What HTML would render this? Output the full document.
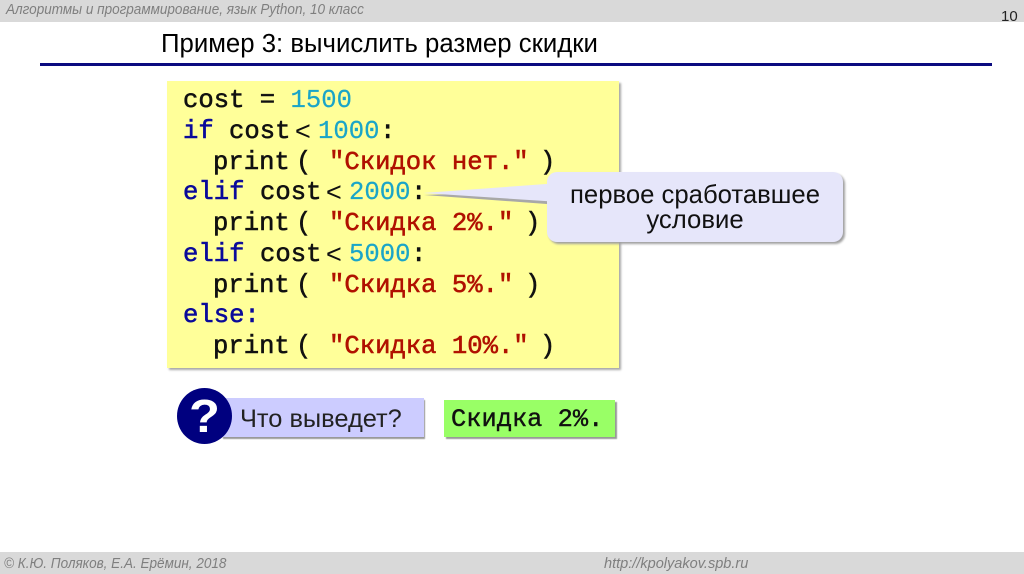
<!DOCTYPE html>
<html><head><meta charset="utf-8"><style>
html,body{margin:0;padding:0;background:#fff}
#p{position:relative;width:1024px;height:574px;overflow:hidden;background:#fff;font-family:"Liberation Sans",sans-serif}
#p div{position:absolute;white-space:pre}
.c{font-family:"Liberation Mono",monospace;font-weight:normal;-webkit-text-stroke:.55px currentColor;font-size:25.6px;line-height:30px;height:30px;color:#111;margin-top:1px}
.k{color:#0a0a9a}.n{color:#1aa5c8;-webkit-text-stroke:.2px currentColor}.s{color:#b01000}
.lt{font-family:"Liberation Sans",sans-serif;-webkit-text-stroke:0;font-size:27px}
</style></head><body><div id="p">
<div style="left:0;top:0;width:1024px;height:22px;background:#d9d9d9"></div>
<div style="left:6px;top:2px;font-size:14.4px;line-height:17px;font-style:italic;color:#7f7f7f;transform-origin:0 0;transform:scaleX(.94)">Алгоритмы и программирование, язык Python, 10 класс</div>
<div style="left:1001px;top:8px;font-size:15px;line-height:18px;color:#222">10</div>
<div style="left:161px;top:29px;font-size:25.5px;line-height:30px;color:#000;transform-origin:0 0;transform:scaleX(1.01)">Пример 3: вычислить размер скидки</div>
<div style="left:40px;top:63px;width:952px;height:3px;background:#0b0b80"></div>

<div style="left:167px;top:81px;width:452px;height:287px;background:#ffff99;box-shadow:2px 2px 2px #a8a8a8"></div>

<div class="c" style="left:183px;top:85px">cost = <span class="n">1500</span></div>

<div class="c k" style="left:183px;top:116px">if</div>
<div class="c" style="left:229px;top:116px">cost</div>
<div class="c lt" style="left:295px;top:115px">&lt;</div>
<div class="c n" style="left:318px;top:116px">1000</div>
<div class="c" style="left:380px;top:116px">:</div>

<div class="c" style="left:213px;top:147px">print</div>
<div class="c" style="left:296px;top:147px">(</div>
<div class="c s" style="left:329px;top:147px">"Скидок нет."</div>
<div class="c" style="left:540px;top:147px">)</div>

<div class="c k" style="left:183px;top:177px">elif</div>
<div class="c" style="left:260px;top:177px">cost</div>
<div class="c lt" style="left:326px;top:176px">&lt;</div>
<div class="c n" style="left:349px;top:177px">2000</div>
<div class="c" style="left:411px;top:177px">:</div>

<div class="c" style="left:213px;top:208px">print</div>
<div class="c" style="left:296px;top:208px">(</div>
<div class="c s" style="left:329px;top:208px">"Скидка 2%."</div>
<div class="c" style="left:525px;top:208px">)</div>

<div class="c k" style="left:183px;top:239px">elif</div>
<div class="c" style="left:260px;top:239px">cost</div>
<div class="c lt" style="left:326px;top:238px">&lt;</div>
<div class="c n" style="left:349px;top:239px">5000</div>
<div class="c" style="left:411px;top:239px">:</div>

<div class="c" style="left:213px;top:270px">print</div>
<div class="c" style="left:296px;top:270px">(</div>
<div class="c s" style="left:329px;top:270px">"Скидка 5%."</div>
<div class="c" style="left:525px;top:270px">)</div>

<div class="c k" style="left:183px;top:300px">else:</div>

<div class="c" style="left:213px;top:331px">print</div>
<div class="c" style="left:296px;top:331px">(</div>
<div class="c s" style="left:329px;top:331px">"Скидка 10%."</div>
<div class="c" style="left:540px;top:331px">)</div>

<svg style="position:absolute;left:0;top:0" width="1024" height="574">
<path d="M424 195 L560 205 L560 190 Z" fill="#a8a8a8"/>
<path d="M423 193 L560 183 L560 202 Z" fill="#e6e6fa"/>
</svg>
<div style="left:547px;top:172px;width:296px;height:70px;background:#e6e6fa;border-radius:10px;box-shadow:2px 2px 2px #a0a0a0"></div>
<div style="left:547px;top:183px;width:296px;text-align:center;font-size:25.7px;line-height:25px;color:#111">первое сработавшее
условие</div>

<div style="left:222px;top:398px;width:202px;height:39px;background:#ccccff;box-shadow:1px 2px 1px #999"></div>
<div style="left:177px;top:388px;width:55px;height:56px;border-radius:50%;background:#00007f"></div>
<div style="left:177px;top:388px;width:55px;height:56px;text-align:center;font-size:46px;font-weight:bold;line-height:56px;color:#fff;transform:scaleX(1.1)">?</div>
<div style="left:240px;top:405px;font-size:25.4px;line-height:28px;color:#222">Что выведет?</div>

<div style="left:444px;top:400px;width:171px;height:37px;background:#99ff66;box-shadow:2px 2px 1px #999"></div>
<div class="c" style="left:451px;top:404px;-webkit-text-stroke:.4px #111;font-size:25.4px">Скидка 2%.</div>

<div style="left:0;top:552px;width:1024px;height:22px;background:#d9d9d9"></div>
<div style="left:4px;top:556px;font-size:14.4px;line-height:17px;font-style:italic;color:#7f7f7f;transform-origin:0 0;transform:scaleX(.94)">© К.Ю. Поляков, Е.А. Ерёмин, 2018</div>
<div style="left:604px;top:556px;font-size:14.4px;line-height:17px;font-style:italic;color:#7f7f7f;transform-origin:0 0;transform:scaleX(1.01)">http://kpolyakov.spb.ru</div>
</div></body></html>
